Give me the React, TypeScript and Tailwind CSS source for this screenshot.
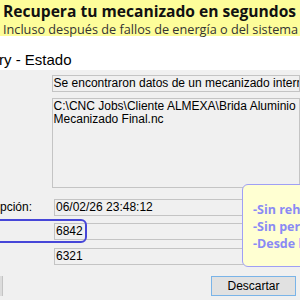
import { FC } from "react";

const field = "h-[17px] border border-[#c4c4c4] bg-[#f0f0f0] px-[1px] text-[12px] leading-[15px] text-black whitespace-nowrap overflow-hidden";

const App: FC = () => {
  return (
    <div className="relative w-[300px] h-[300px] overflow-hidden bg-[#f0f0f0] font-['Liberation_Sans',Arial,sans-serif]">
      <div className="h-[36px] bg-[#fdfd9a] pl-[3px] pt-[2px] font-['Open_Sans',sans-serif] whitespace-nowrap">
        <h1 className="text-[15.6px] leading-[18px] font-bold text-[#111]">Recupera tu mecanizado en segundos</h1>
        <p className="mt-[3px] text-[12.7px] leading-[13px] text-[#333]">Incluso después de fallos de energía o del sistema</p>
      </div>
      <div className="h-[34px] bg-white pt-[15px]">
        <h2 className="text-[15px] leading-[17px] text-black -ml-[1px]">ry - Estado</h2>
      </div>

      <div className="flex flex-col pt-[5px]">
        <div className="flex items-center">
          <span className="w-[54px]" />
          <div className={`${field} w-[260px]`}>Se encontraron datos de un mecanizado interrumpido</div>
        </div>
        <div className="flex mt-[6px]">
          <span className="w-[54px]" />
          <div className="h-[90px] w-[260px] border border-[#c4c4c4] bg-[#f0f0f0] px-[1px] pt-[1px] text-[12px] leading-[13px] text-black whitespace-nowrap overflow-hidden">
            <p>C:\CNC Jobs\Cliente ALMEXA\Brida Aluminio</p>
            <p>Mecanizado Final.nc</p>
          </div>
        </div>
        <div className="flex items-center mt-[10px]">
          <span className="w-[54px] text-[12px] text-black">pción:</span>
          <div className={`${field} w-[200px]`}>06/02/26 23:48:12</div>
        </div>
        <div className="flex items-center mt-[7px]">
          <span className="w-[54px]" />
          <div className={`${field} w-[200px]`}>6842</div>
        </div>
        <div className="flex items-center mt-[8px]">
          <span className="w-[54px]" />
          <div className={`${field} w-[200px]`}>6321</div>
        </div>
        <div className="flex justify-between items-center mt-[11px]">
          <div className="h-[20px] w-[3px] bg-[#dcdcdc] border-r border-[#c4c4c4]" />
          <button className="mr-[4px] h-[20px] w-[85px] border border-[#7ab4e8] bg-[#e1e1e1] text-[12px] text-black">
            Descartar
          </button>
        </div>
      </div>

      <div className="absolute left-[-10px] top-[219px] w-[97px] h-[24px] rounded-[6px] border-2 border-[#4646d8]" />

      <div className="absolute left-[242px] top-[184px] w-[80px] h-[83px] rounded-[6px] border border-[#9f9ff5] bg-[#ffffd2] pl-[10px] pt-[16px] font-['Open_Sans',sans-serif] text-[12.5px] leading-[17px] font-bold text-[#8a8af5] whitespace-nowrap">
        <p>-Sin rehacer</p>
        <p>-Sin perder</p>
        <p>-Desde la línea</p>
      </div>
    </div>
  );
};

export default App;
